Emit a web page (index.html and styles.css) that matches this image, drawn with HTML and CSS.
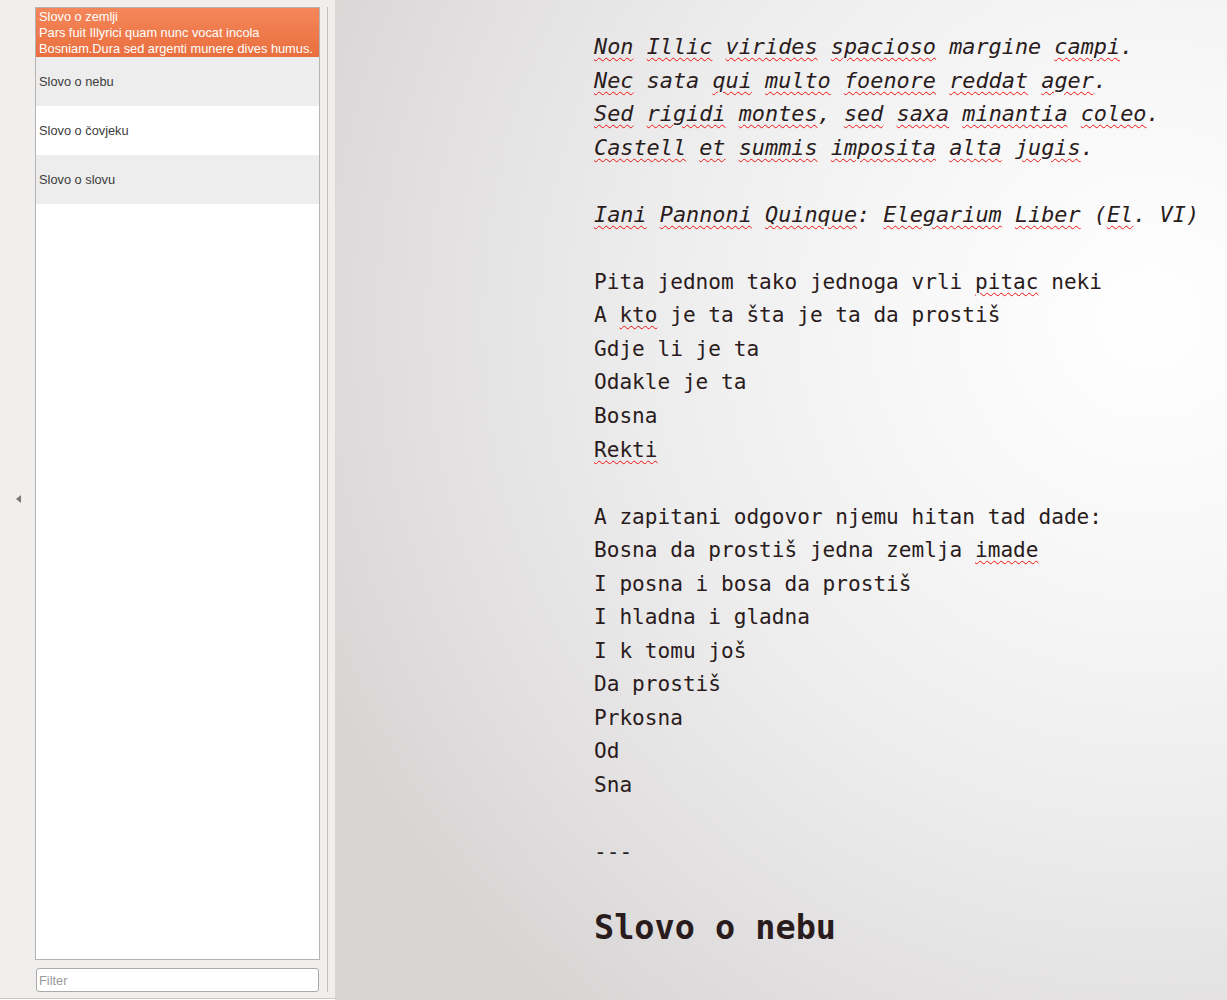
FILE: index.html
```html
<!DOCTYPE html>
<html>
<head>
<meta charset="utf-8">
<title>Slovo</title>
<link rel="stylesheet" href="styles.css">
</head>
<body>
<div class="app">
  <aside class="sidebar">
    <div class="collapse"><span class="arrow"></span></div>
    <div class="panel">
      <ul class="list">
        <li class="item selected">Slovo o zemlji<br>Pars fuit Illyrici quam nunc vocat incola<br>Bosniam.Dura sed argenti munere dives humus.</li>
        <li class="item odd">Slovo o nebu</li>
        <li class="item">Slovo o čovjeku</li>
        <li class="item odd">Slovo o slovu</li>
      </ul>
      <input class="filter" type="text" placeholder="Filter">
    </div>
    <div class="scroll"><div class="track"></div></div>
  </aside>
  <main class="editor">
    <div class="doc">
      <p class="stanza it"><span class="sp">Non</span> <span class="sp">Illic</span> <span class="sp">virides</span> <span class="sp">spacioso</span> margine <span class="sp">campi</span>.<br><span class="sp">Nec</span> sata <span class="sp">qui</span> <span class="sp">multo</span> <span class="sp">foenore</span> <span class="sp">reddat</span> <span class="sp">ager</span>.<br><span class="sp">Sed</span> <span class="sp">rigidi</span> <span class="sp">montes</span>, <span class="sp">sed</span> <span class="sp">saxa</span> <span class="sp">minantia</span> <span class="sp">coleo</span>.<br><span class="sp">Castell</span> <span class="sp">et</span> <span class="sp">summis</span> <span class="sp">imposita</span> <span class="sp">alta</span> <span class="sp">jugis</span>.</p>
      <p class="stanza it"><span class="sp">Iani</span> <span class="sp">Pannoni</span> <span class="sp">Quinque</span>: <span class="sp">Elegarium</span> <span class="sp">Liber</span> (<span class="sp">El</span>. VI)</p>
      <p class="stanza">Pita jednom tako jednoga vrli <span class="sp">pitac</span> neki<br>A <span class="sp">kto</span> je ta šta je ta da prostiš<br>Gdje li je ta<br>Odakle je ta<br>Bosna<br><span class="sp">Rekti</span></p>
      <p class="stanza">A zapitani odgovor njemu hitan tad dade:<br>Bosna da prostiš jedna zemlja <span class="sp">imade</span><br>I posna i bosa da prostiš<br>I hladna i gladna<br>I k tomu još<br>Da prostiš<br>Prkosna<br>Od<br>Sna</p>
      <p class="stanza">---</p>
      <h1 class="heading">Slovo o nebu</h1>
    </div>
  </main>
</div>
</body>
</html>
```

FILE: styles.css
```css
html, body {
  margin: 0;
  padding: 0;
  height: 100%;
  overflow: hidden;
}
.app {
  display: flex;
  width: 1227px;
  height: 1000px;
}
.sidebar {
  width: 335px;
  flex: none;
  display: flex;
  background: #f0efee;
  border-bottom: 1px solid #c9c7c5;
  box-sizing: border-box;
  height: 999px;
}
.collapse {
  width: 35px;
  flex: none;
  display: flex;
  align-items: center;
  justify-content: center;
}
.arrow {
  width: 0;
  height: 0;
  border-top: 4px solid transparent;
  border-bottom: 4px solid transparent;
  border-right: 5px solid #7a7977;
  margin-left: 1px;
}
.panel {
  width: 285px;
  flex: none;
  display: flex;
  flex-direction: column;
  padding-top: 7px;
}
.list {
  list-style: none;
  margin: 0;
  padding: 0;
  height: 953px;
  box-sizing: border-box;
  border: 1px solid #b6b4b2;
  background: #ffffff;
  overflow: hidden;
}
.item {
  height: 49px;
  display: flex;
  align-items: center;
  padding-left: 3px;
  font-family: "Liberation Sans", "Open Sans", sans-serif;
  font-size: 12.8px;
  color: #3c3c3c;
  background: #ffffff;
}
.item.odd {
  background: #ededed;
}
.item.selected {
  display: block;
  padding-top: 1px;
  box-sizing: border-box;
  line-height: 16px;
  color: #ffffff;
  background: linear-gradient(#f5875a, #e96e3d);
}
.filter {
  margin: 8px 0 0 1px;
  width: 283px;
  height: 24px;
  box-sizing: border-box;
  border: 1px solid #acaaa8;
  border-radius: 3px;
  background: #ffffff;
  padding: 0 2px;
  font-family: "Liberation Sans", "Open Sans", sans-serif;
  font-size: 12.8px;
  outline: none;
}
.filter::placeholder {
  color: #9a9a9a;
}
.scroll {
  flex: 1;
  display: flex;
  justify-content: center;
  padding: 7px 0 7px;
  box-sizing: border-box;
}
.track {
  width: 1px;
  height: 985px;
  background: #c2c0be;
  margin-left: -1px;
}
.editor {
  flex: 1;
  height: 1000px;
  overflow: hidden;
  background: radial-gradient(circle 900px at 815px 320px, #ffffff 0%, #f8f7f7 28%, #eeeded 55%, #e2e0e0 80%, #d8d5d5 100%);
  background-color: #d8d5d5;
}
.doc {
  padding: 30px 0 0 259px;
  font-family: "DejaVu Sans Mono", "Liberation Mono", monospace;
  font-size: 21.1px;
  line-height: 33.55px;
  color: #2a1c1c;
  white-space: nowrap;
}
.stanza {
  margin: 0 0 33.55px 0;
}
.it {
  font-style: italic;
  font-size: 21.85px;
}
.sp {
  text-decoration: underline wavy #ee1111;
  text-decoration-thickness: 1px;
  text-underline-offset: 3px;
}
.heading {
  margin: 39px 0 0 0;
  font-size: 33.5px;
  line-height: 40px;
  font-weight: bold;
}
```
